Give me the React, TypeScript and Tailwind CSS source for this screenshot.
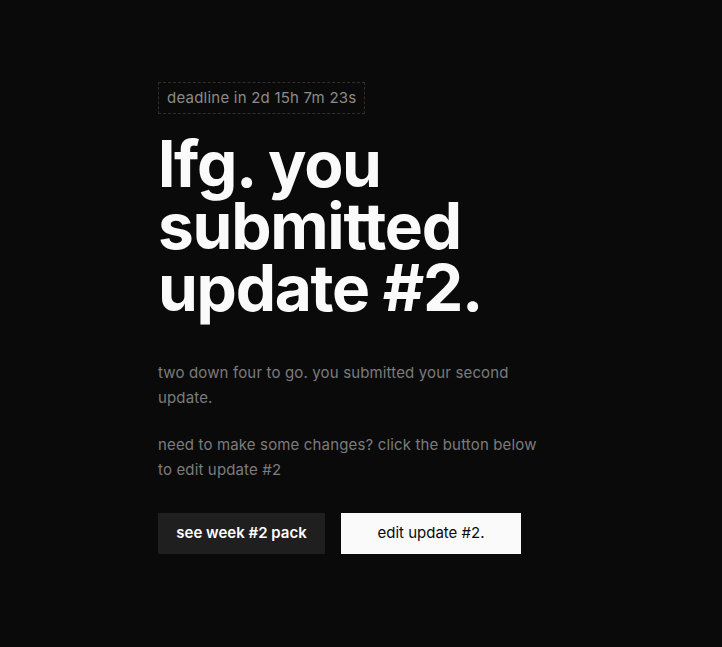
const App = () => {
  return (
    <main
      className="min-h-[647px] w-full bg-[#0a0a0a] text-white"
      style={{ fontFamily: "Inter, 'Noto Sans', sans-serif" }}>
      <section className="mx-auto w-[406px] pt-[82px]">
        <div className="inline-block border border-dashed border-[#2e2e2e] px-[8px] py-[5px] text-[15px] leading-5 tracking-[0.015em] text-[#8a8a8a]">
          deadline in 2d 15h 7m 23s
        </div>
        <h1 className="mt-[19px] text-[64px] font-bold leading-[62px] tracking-[-0.02em] text-[#fafafa]">
          lfg. you
          <br />
          submitted
          <br />
          update #2.
        </h1>
        <div className="mt-[41px] flex max-w-[385px] flex-col gap-[22px] text-[15px] leading-[25px] tracking-[0.01em] text-[#7c7c7c]">
          <p>two down four to go. you submitted your second update.</p>
          <p>need to make some changes? click the button below to edit update #2</p>
        </div>
        <div className="mt-[31px] flex gap-4">
          <button className="h-[41px] w-[167px] bg-[#1f1f1f] text-[15px] font-semibold text-white">
            see week #2 pack
          </button>
          <button className="h-[41px] w-[180px] bg-[#fafafa] text-[15px] text-[#0a0a0a]">
            edit update #2.
          </button>
        </div>
      </section>
    </main>
  );
};

export default App;
